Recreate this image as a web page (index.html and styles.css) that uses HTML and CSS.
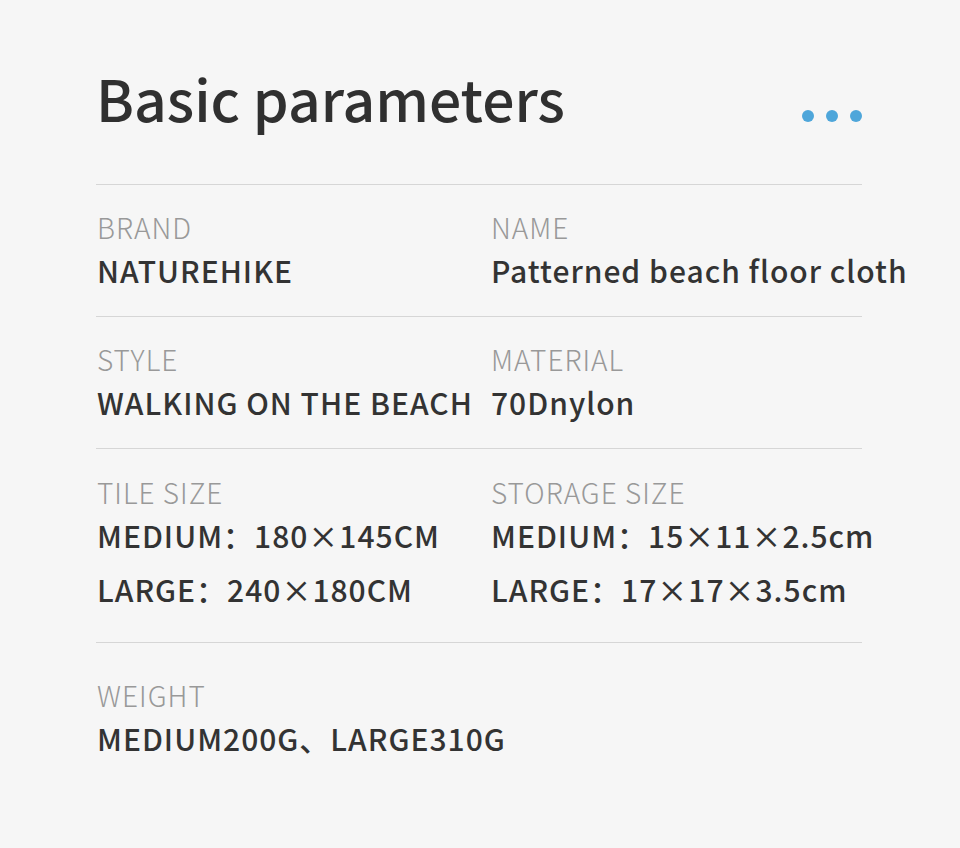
FILE: index.html
```html
<!DOCTYPE html>
<html lang="en">
<head>
    <meta charset="UTF-8">
    <meta name="viewport" content="width=device-width, initial-scale=1.0">
    <title>Basic parameters</title>
    <link rel="stylesheet" href="styles.css">
</head>
<body>
    <div class="params">
        <div class="head">
            <h1>Basic parameters</h1>
            <div class="dots"><span></span><span></span><span></span></div>
        </div>

        <div class="row">
            <div class="cell">
                <div class="label">BRAND</div>
                <div class="value">NATUREHIKE</div>
            </div>
            <div class="cell">
                <div class="label">NAME</div>
                <div class="value">Patterned beach floor cloth</div>
            </div>
        </div>

        <div class="row">
            <div class="cell">
                <div class="label">STYLE</div>
                <div class="value">WALKING ON THE BEACH</div>
            </div>
            <div class="cell">
                <div class="label">MATERIAL</div>
                <div class="value">70Dnylon</div>
            </div>
        </div>

        <div class="row row-multi">
            <div class="cell">
                <div class="label">TILE SIZE</div>
                <div class="value">MEDIUM：180×145CM</div>
                <div class="value">LARGE：240×180CM</div>
            </div>
            <div class="cell">
                <div class="label">STORAGE SIZE</div>
                <div class="value">MEDIUM：15×11×2.5cm</div>
                <div class="value">LARGE：17×17×3.5cm</div>
            </div>
        </div>

        <div class="row row-last">
            <div class="cell">
                <div class="label">WEIGHT</div>
                <div class="value">MEDIUM200G、LARGE310G</div>
            </div>
        </div>
    </div>
</body>
</html>
```

FILE: styles.css
```css
body {
    margin: 0;
    background-color: #f6f6f6;
    font-family: "Noto Sans CJK SC", "Noto Sans", sans-serif;
    color: #333;
}
.params {
    width: 766px;
    margin-left: 96px;
    padding-top: 62px;
}
.head {
    display: flex;
    justify-content: space-between;
    align-items: flex-end;
    padding-bottom: 52px;
}
.head h1 {
    margin: 0;
    font-size: 57px;
    line-height: 70px;
    font-weight: 500;
    color: #303030;
}
.dots {
    display: flex;
    gap: 12px;
    margin-bottom: 10px;
}
.dots span {
    width: 12px;
    height: 12px;
    border-radius: 50%;
    background: #4ea6da;
}
.row {
    display: grid;
    grid-template-columns: 394px 1fr;
    border-top: 1px solid #d6d6d6;
    padding: 21px 0 24px 1px;
}
.row-multi {
    padding-top: 22px;
    padding-bottom: 31px;
}
.row-last {
    padding-top: 31px;
}
.label {
    font-size: 28px;
    line-height: 42px;
    font-weight: 300;
    letter-spacing: 1px;
    color: #999;
}
.value {
    font-size: 30px;
    line-height: 44px;
    font-weight: 500;
    letter-spacing: 1px;
    color: #333;
    white-space: nowrap;
}
.value + .value {
    margin-top: 10px;
}
```
